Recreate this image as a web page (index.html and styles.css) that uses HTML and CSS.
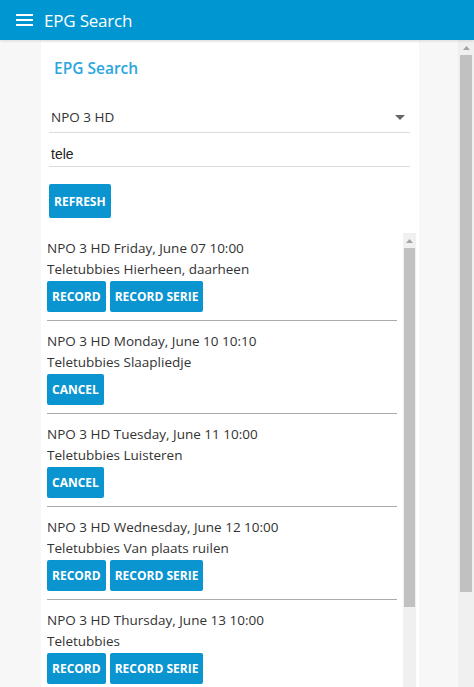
FILE: index.html
```html
<!DOCTYPE html>
<html lang="en">
<head>
<meta charset="utf-8">
<title>EPG Search</title>
<link rel="stylesheet" href="styles.css">
</head>
<body>
<header class="appbar">
  <svg class="menu-icon" width="18" height="14" viewBox="0 0 18 14" aria-hidden="true">
    <rect x="0" y="1" width="17" height="2" fill="#fff"/>
    <rect x="0" y="6" width="17" height="2" fill="#fff"/>
    <rect x="0" y="11" width="17" height="2" fill="#fff"/>
  </svg>
  <span class="appbar-title">EPG Search</span>
</header>
<div class="viewport">
  <main class="page">
    <section class="card">
      <h2 class="card-title">EPG Search</h2>
      <div class="field select-field">
        <span class="field-value">NPO 3 HD</span>
        <svg class="caret" width="10" height="5" viewBox="0 0 10 5" aria-hidden="true"><path d="M0 0h10L5 5z" fill="#666"/></svg>
      </div>
      <div class="field input-field">
        <span class="field-value input-value">tele</span>
      </div>
      <div class="refresh-row">
        <button class="btn">REFRESH</button>
      </div>
      <div class="results">
        <div class="results-list">
          <div class="item">
            <div class="item-line">NPO 3 HD Friday, June 07 10:00</div>
            <div class="item-line">Teletubbies Hierheen, daarheen</div>
            <div class="item-actions"><button class="btn">RECORD</button><button class="btn">RECORD SERIE</button></div>
          </div>
          <div class="item">
            <div class="item-line">NPO 3 HD Monday, June 10 10:10</div>
            <div class="item-line">Teletubbies Slaapliedje</div>
            <div class="item-actions"><button class="btn">CANCEL</button></div>
          </div>
          <div class="item">
            <div class="item-line">NPO 3 HD Tuesday, June 11 10:00</div>
            <div class="item-line">Teletubbies Luisteren</div>
            <div class="item-actions"><button class="btn">CANCEL</button></div>
          </div>
          <div class="item">
            <div class="item-line">NPO 3 HD Wednesday, June 12 10:00</div>
            <div class="item-line">Teletubbies Van plaats ruilen</div>
            <div class="item-actions"><button class="btn">RECORD</button><button class="btn">RECORD SERIE</button></div>
          </div>
          <div class="item">
            <div class="item-line">NPO 3 HD Thursday, June 13 10:00</div>
            <div class="item-line">Teletubbies</div>
            <div class="item-actions"><button class="btn">RECORD</button><button class="btn">RECORD SERIE</button></div>
          </div>
        </div>
        <div class="scrollbar inner-scrollbar">
          <div class="sb-arrow"><svg width="7" height="4" viewBox="0 0 7 4"><path d="M0 4L3.5 0L7 4z" fill="#a3a3a3"/></svg></div>
          <div class="sb-thumb inner-thumb"></div>
        </div>
      </div>
    </section>
  </main>
  <div class="scrollbar outer-scrollbar">
    <div class="sb-arrow"><svg width="7" height="4" viewBox="0 0 7 4"><path d="M0 4L3.5 0L7 4z" fill="#a3a3a3"/></svg></div>
    <div class="sb-thumb outer-thumb"></div>
  </div>
</div>
</body>
</html>
```
FILE: styles.css
```css
* { box-sizing: border-box; }
html, body { margin: 0; padding: 0; height: 100%; overflow: hidden; }
body {
  font-family: "Open Sans", "Noto Sans", sans-serif;
  background: #f7f7f7;
  color: #333;
}
.appbar {
  height: 40px;
  background: #0096d1;
  display: flex;
  align-items: center;
  padding-left: 16px;
  box-shadow: 0 1px 3px rgba(0,0,0,0.12);
  position: relative;
  z-index: 1;
}
.menu-icon { display: block; margin-right: 10px; }
.appbar-title {
  color: #fff;
  font-size: 17px;
  font-weight: 500;
  letter-spacing: -0.2px;
}
.viewport {
  display: flex;
  height: calc(100% - 40px);
}
.page {
  flex: 1;
  display: flex;
  justify-content: center;
  padding-top: 2px;
  padding-left: 2px;
  overflow: hidden;
}
.card {
  width: 378px;
  background: #fff;
  padding: 0 9px 0 8px;
  display: flex;
  flex-direction: column;
}
.card-title {
  margin: 0;
  padding: 15px 0 0 5px;
  height: 56px;
  font-size: 15.5px;
  font-weight: 600;
  color: #2aa6df;
}
.field {
  display: flex;
  align-items: center;
  border-bottom: 1px solid #dcdcdc;
  padding-left: 2px;
}
.select-field { height: 31px; padding-right: 5px; margin-top: 4px; justify-content: space-between; }
.input-field { height: 34px; padding-top: 8px; }
.field-value { font-size: 13.5px; color: #333; }
.input-value { font-family: "Liberation Sans", Arial, sans-serif; font-size: 14px; color: #222; }
.caret { display: block; }
.refresh-row { padding-top: 17px; height: 66px; }
.btn {
  font-family: "Open Sans", "Noto Sans", sans-serif;
  font-weight: 700;
  font-size: 12px;
  color: #fff;
  background: #0a94d0;
  border: 0;
  border-radius: 2px;
  height: 31px;
  padding: 0 5px;
  margin: 0;
}
.refresh-row .btn { height: 34px; padding: 0 5px; }
.results {
  flex: 1;
  display: flex;
  margin: 0 -6px 0 -2px;
  min-height: 0;
}
.results-list {
  flex: 1;
  padding: 0 6px 0 0;
  overflow: hidden;
}
.item {
  padding: 10px 0 8px;
  border-bottom: 1px solid #ababab;
}
.item:first-child { padding-top: 5px; }
.item-line { font-size: 13.5px; line-height: 21px; color: #333; white-space: nowrap; }
.item-actions { display: flex; gap: 4px; margin-top: 1px; }
.scrollbar {
  background: #f0f0f0;
  display: flex;
  flex-direction: column;
  align-items: stretch;
}
.inner-scrollbar { width: 13px; }
.outer-scrollbar { width: 16px; }
.sb-arrow {
  height: 15px;
  display: flex;
  justify-content: center;
  align-items: center;
}
.sb-arrow svg { display: block; }
.sb-thumb { background: #c1c1c1; margin: 0 1px; }
.inner-thumb { height: 359px; }
.outer-thumb { height: 537px; margin: 0 2px; }
```
